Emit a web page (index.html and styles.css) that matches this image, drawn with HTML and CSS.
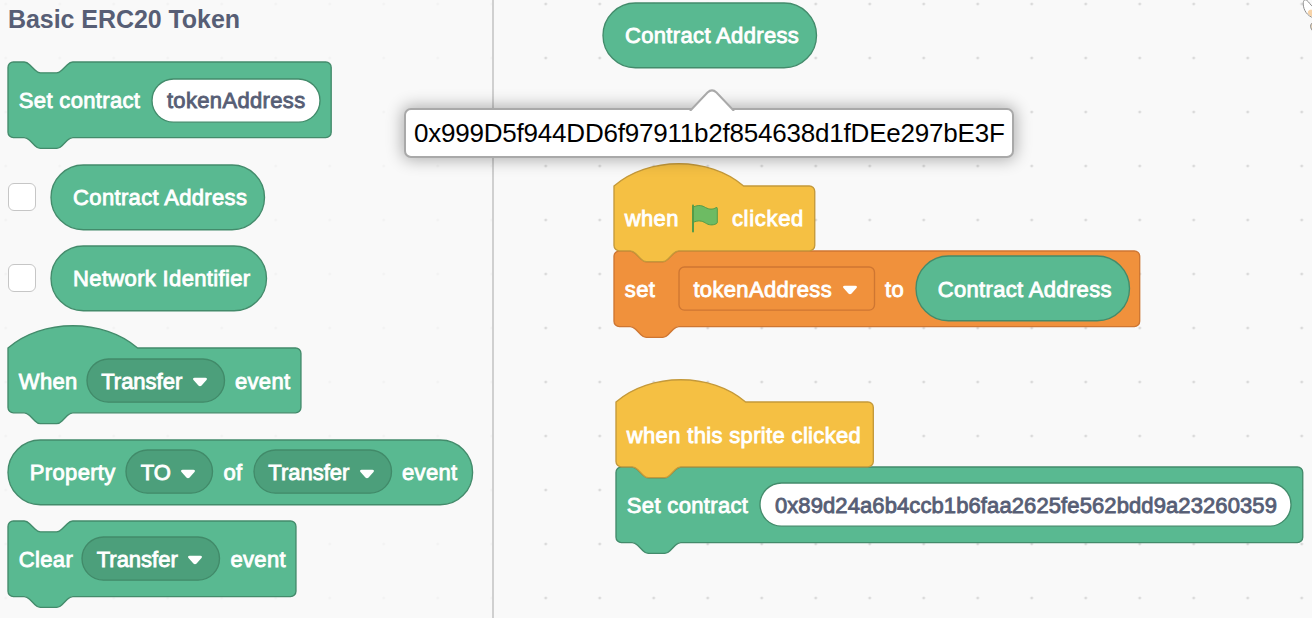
FILE: index.html
```html
<!DOCTYPE html>
<html lang="en">
<head>
<meta charset="utf-8">
<title>Basic ERC20 Token</title>
<link rel="stylesheet" href="styles.css">
</head>
<body>
<main class="editor">
  <aside class="palette">
    <h1 class="title">Basic ERC20 Token</h1>

    <div class="block stack green set-contract">
      <svg class="shape"><path transform="scale(1.35)" d="M0,4A4,4 0 0,1 4,0H12c2,0 3,1 4,2l4,4c1,1 2,2 4,2h12c2,0 3,-1 4,-2l4,-4c1,-1 2,-2 4,-2H235.4a4,4 0 0,1 4,4V52a4,4 0 0,1 -4,4H48c-2,0 -3,1 -4,2l-4,4c-1,1 -2,2 -4,2h-12c-2,0 -3,-1 -4,-2l-4,-4c-1,-1 -2,-2 -4,-2H4a4,4 0 0,1 -4,-4z"/></svg>
      <span class="label w-set-contract">Set contract</span>
      <span class="field input in-token"><svg class="shape"><rect width="100%" height="100%" rx="21.6"/></svg><span class="label">tokenAddress</span></span>
    </div>

    <div class="row row-a">
      <span class="check"></span>
      <div class="block reporter green address"><svg class="shape"><rect width="100%" height="100%" rx="32.4"/></svg><span class="label">Contract Address</span></div>
    </div>
    <div class="row row-b">
      <span class="check"></span>
      <div class="block reporter green network"><svg class="shape"><rect width="100%" height="100%" rx="32.4"/></svg><span class="label">Network Identifier</span></div>
    </div>

    <div class="block hat green when-event">
      <svg class="shape"><path transform="scale(1.35)" d="M0,0c25,-22 71,-22 96,0H213a4,4 0 0,1 4,4V44a4,4 0 0,1 -4,4H48c-2,0 -3,1 -4,2l-4,4c-1,1 -2,2 -4,2h-12c-2,0 -3,-1 -4,-2l-4,-4c-1,-1 -2,-2 -4,-2H4a4,4 0 0,1 -4,-4z"/></svg>
      <span class="label w-when">When</span>
      <span class="field menu transfer"><svg class="shape"><rect width="100%" height="100%" rx="21.6"/></svg><span class="label tight">Transfer</span><svg class="arrow" viewBox="0 0 16 10"><path d="M2.600 .7H13.400C15 .7 15.400 2 14.500 3L9.600 8.500C8.600 9.600 7.400 9.600 6.400 8.500L1.500 3C.6 2 1 .7 2.600 .7z"/></svg></span>
      <span class="label">event</span>
    </div>

    <div class="block reporter green property">
      <svg class="shape"><rect width="100%" height="100%" rx="32.4"/></svg>
      <span class="label w-property">Property</span>
      <span class="field menu to-menu"><svg class="shape"><rect width="100%" height="100%" rx="21.6"/></svg><span class="label tight">TO</span><svg class="arrow" viewBox="0 0 16 10"><path d="M2.600 .7H13.400C15 .7 15.400 2 14.500 3L9.600 8.500C8.600 9.600 7.400 9.600 6.400 8.500L1.500 3C.6 2 1 .7 2.600 .7z"/></svg></span>
      <span class="label w-of">of</span>
      <span class="field menu transfer"><svg class="shape"><rect width="100%" height="100%" rx="21.6"/></svg><span class="label tight">Transfer</span><svg class="arrow" viewBox="0 0 16 10"><path d="M2.600 .7H13.400C15 .7 15.400 2 14.500 3L9.600 8.500C8.600 9.600 7.400 9.600 6.400 8.500L1.500 3C.6 2 1 .7 2.600 .7z"/></svg></span>
      <span class="label">event</span>
    </div>

    <div class="block stack green clear-event">
      <svg class="shape"><path transform="scale(1.35)" d="M0,4A4,4 0 0,1 4,0H12c2,0 3,1 4,2l4,4c1,1 2,2 4,2h12c2,0 3,-1 4,-2l4,-4c1,-1 2,-2 4,-2H209.3a4,4 0 0,1 4,4V52a4,4 0 0,1 -4,4H48c-2,0 -3,1 -4,2l-4,4c-1,1 -2,2 -4,2h-12c-2,0 -3,-1 -4,-2l-4,-4c-1,-1 -2,-2 -4,-2H4a4,4 0 0,1 -4,-4z"/></svg>
      <span class="label w-clear">Clear</span>
      <span class="field menu transfer"><svg class="shape"><rect width="100%" height="100%" rx="21.6"/></svg><span class="label tight">Transfer</span><svg class="arrow" viewBox="0 0 16 10"><path d="M2.600 .7H13.400C15 .7 15.400 2 14.500 3L9.600 8.500C8.600 9.600 7.400 9.600 6.400 8.500L1.500 3C.6 2 1 .7 2.600 .7z"/></svg></span>
      <span class="label">event</span>
    </div>
  </aside>

  <section class="canvas">
    <div class="script script-address">
      <div class="block reporter green address"><svg class="shape"><rect width="100%" height="100%" rx="32.4"/></svg><span class="label">Contract Address</span></div>
    </div>

    <div class="script script-flag">
      <div class="block hat yellow flag-hat">
        <svg class="shape"><path transform="scale(1.35)" d="M0,0c25,-22 71,-22 96,0H144.7a4,4 0 0,1 4,4V44a4,4 0 0,1 -4,4H48c-2,0 -3,1 -4,2l-4,4c-1,1 -2,2 -4,2h-12c-2,0 -3,-1 -4,-2l-4,-4c-1,-1 -2,-2 -4,-2H4a4,4 0 0,1 -4,-4z"/></svg>
        <span class="label w-when-low">when</span>
        <svg class="flag" viewBox="0 0 28 30"><path class="cloth" d="M2 3.2C8 .2 11.500 1.800 14.500 3.500C18.500 5.700 22 5.500 25 3.700Q26.300 3 26.300 4.500V18.200Q26.300 19.300 25.300 19.700C21.500 21.700 17.500 21 14.500 19C11 16.700 7 16 2 18.500z"/><path class="pole" d="M2 1.600V27.600"/></svg>
        <span class="label clicked">clicked</span>
      </div>
      <div class="block stack orange set-var">
        <svg class="shape"><path transform="scale(1.35)" d="M0,4A4,4 0 0,1 4,0H12c2,0 3,1 4,2l4,4c1,1 2,2 4,2h12c2,0 3,-1 4,-2l4,-4c1,-1 2,-2 4,-2H385.4a4,4 0 0,1 4,4V52a4,4 0 0,1 -4,4H48c-2,0 -3,1 -4,2l-4,4c-1,1 -2,2 -4,2h-12c-2,0 -3,-1 -4,-2l-4,-4c-1,-1 -2,-2 -4,-2H4a4,4 0 0,1 -4,-4z"/></svg>
        <span class="label w-set">set</span>
        <span class="field menu var-menu"><svg class="shape"><rect width="100%" height="100%" rx="5.4"/></svg><span class="label">tokenAddress</span><svg class="arrow" viewBox="0 0 16 10"><path d="M2.600 .7H13.400C15 .7 15.400 2 14.500 3L9.600 8.500C8.600 9.600 7.400 9.600 6.400 8.500L1.500 3C.6 2 1 .7 2.600 .7z"/></svg></span>
        <span class="label w-to">to</span>
        <div class="block reporter green address"><svg class="shape"><rect width="100%" height="100%" rx="32.4"/></svg><span class="label">Contract Address</span></div>
      </div>
    </div>

    <div class="script script-sprite">
      <div class="block hat yellow sprite-hat">
        <svg class="shape"><path transform="scale(1.35)" d="M0,0c25,-22 71,-22 96,0H186.600a4,4 0 0,1 4,4V44a4,4 0 0,1 -4,4H48c-2,0 -3,1 -4,2l-4,4c-1,1 -2,2 -4,2h-12c-2,0 -3,-1 -4,-2l-4,-4c-1,-1 -2,-2 -4,-2H4a4,4 0 0,1 -4,-4z"/></svg>
        <span class="label">when this sprite clicked</span>
      </div>
      <div class="block stack green set-long">
        <svg class="shape"><path transform="scale(1.35)" d="M0,4A4,4 0 0,1 4,0H12c2,0 3,1 4,2l4,4c1,1 2,2 4,2h12c2,0 3,-1 4,-2l4,-4c1,-1 2,-2 4,-2H504.700a4,4 0 0,1 4,4V52a4,4 0 0,1 -4,4H48c-2,0 -3,1 -4,2l-4,4c-1,1 -2,2 -4,2h-12c-2,0 -3,-1 -4,-2l-4,-4c-1,-1 -2,-2 -4,-2H4a4,4 0 0,1 -4,-4z"/></svg>
        <span class="label w-set-contract">Set contract</span>
        <span class="field input in-long"><svg class="shape"><rect width="100%" height="100%" rx="21.6"/></svg><span class="label hex">0x89d24a6b4ccb1b6faa2625fe562bdd9a23260359</span></span>
      </div>
    </div>

    <svg class="sprite" viewBox="0 0 10 34"><path class="ear" d="M12 18C5 16 1.500 10 1.200 4C1.200 0 3-1 5 .5C7 2 8 4.500 11 7z"/><path class="tan" d="M12 17.300C8 16.500 5.500 14 5.800 12C6.500 9.500 9 9.500 12 10z"/><path class="ear tanfill" d="M12 22C7.500 23 7.500 29 12 32z"/></svg>
  </section>

  <div class="bubble">
    <svg class="tip" viewBox="0 0 48 22"><path d="M2 22L19.500 3.500Q24 -.8 28.500 3.500L46 22"/></svg>
    <span class="value">0x999D5f944DD6f97911b2f854638d1fDEe297bE3F</span>
  </div>
</main>
</body>
</html>
```
FILE: styles.css
```css
body {
  margin: 0;
  font-family: "Liberation Sans", Arial, sans-serif;
}

.editor {
  position: relative;
  display: grid;
  grid-template-columns: 494px 1fr;
  width: 1312px;
  height: 618px;
  overflow: hidden;
  background: #f9f9f9 radial-gradient(circle at 27px 27px, #dadada 1px, transparent 1.8px) -21.3px -23px / 54px 54px;
}

.palette {
  display: flex;
  flex-direction: column;
  box-sizing: border-box;
  padding-left: 8px;
  border-right: 2px solid #d0d0d0;
  background: rgba(249, 249, 249, 0.8);
}

.title {
  margin: 0 0 22.3px;
  height: 40px;
  line-height: 39px;
  font-size: 25px;
  letter-spacing: -0.06px;
  white-space: nowrap;
  color: #575e75;
}

/* Blocks: an SVG outline behind a row of labels and fields */
.block,
.field {
  position: relative;
  display: flex;
  flex: none;
  align-items: center;
  box-sizing: border-box;
}

.block {
  gap: 10.8px;
  padding: 0 10.8px;
  --text: #fff;
}

.stack { height: 75.6px; }
.hat,
.reporter { height: 64.8px; }
.reporter { padding: 0 21.8px; }

.shape {
  position: absolute;
  left: 0;
  top: 0;
  width: 100%;
  height: 100%;
  overflow: visible;
  fill: var(--fill);
  stroke: var(--line);
  stroke-width: 1.35px;
}

.shape path { stroke-width: 1px; }

.green { --fill: #59b991; --line: #438b6b; }
.yellow { --fill: #f5c043; --line: #c4993a; }
.orange { --fill: #f0913c; --line: #ce7632; }

.label {
  position: relative;
  flex: none;
  padding-top: 2.4px;
  font-size: 22px;
  line-height: 26px;
  letter-spacing: 0.34px;
  white-space: nowrap;
  color: var(--text);
  -webkit-text-stroke: 0.85px var(--text);
}

.tight { letter-spacing: 0; }
.hex { letter-spacing: 0.1px; }
.clicked { letter-spacing: 0.7px; }

.field {
  height: 43.2px;
  padding: 0 14.6px;
  justify-content: space-between;
}

.menu { padding-right: 16.2px; }
.input { --fill: #fff; --text: #575e75; }
.green > .menu { --fill: #4c9f7b; --line: #418a69; }

.arrow {
  position: relative;
  flex: none;
  width: 16px;
  height: 10px;
  margin-top: 3px;
  fill: #fff;
}

.w-set-contract { width: 122.7px; }
.w-when { width: 57px; }
.w-property { width: 85.5px; }
.w-of { width: 19.5px; }
.w-clear { width: 52.5px; }
.w-when-low { width: 54px; }
.w-set { width: 43.2px; }
.w-to { width: 20px; }
.in-token { width: 168px; }
.in-long { width: 531px; }
.transfer { width: 137.5px; }
.to-menu { width: 86.5px; }
.var-menu { width: 195.5px; }

.set-contract { width: 323.2px; margin-bottom: 26.7px; }
.address { width: 213.5px; }
.network { width: 215.5px; }
.when-event { width: 293px; margin-bottom: 26.9px; }
.property { width: 464.6px; margin-bottom: 16.2px; }
.clear-event { width: 288px; }

.row { display: flex; align-items: center; gap: 15.3px; }
.row-a { margin-bottom: 16.2px; }
.row-b { margin-bottom: 37.6px; }

.check {
  width: 28px;
  height: 28px;
  box-sizing: border-box;
  border: 1px solid #c6c6c6;
  border-radius: 6px;
  background: #fff;
}

/* Scripts sit freely on the canvas */
.canvas { position: relative; }
.script { position: absolute; }
.script-address { left: 109.2px; top: 2.7px; }
.script-flag { left: 120px; top: 185.9px; }
.script-sprite { left: 122px; top: 402.4px; }

.script .hat { z-index: 1; }
.flag-hat { width: 200.7px; }
.sprite-hat { width: 257.3px; }
.set-var { width: 525.7px; }
.set-long { width: 686.8px; }

.flag {
  position: relative;
  flex: none;
  width: 28px;
  height: 30px;
  margin: 1px 2px 0 1.5px;
}

.cloth { fill: #6dbb63; stroke: #549b48; stroke-width: 1px; }
.pole { fill: none; stroke: #549b48; stroke-width: 2px; stroke-linecap: round; }

.sprite {
  position: absolute;
  right: 0;
  top: 0;
  width: 10px;
  height: 34px;
}

.ear { fill: #fff; stroke: #8c8c8c; stroke-width: 1px; }
.tan { fill: #f7d3a8; }
.tanfill { fill: #f0dcc0; }

.bubble {
  position: absolute;
  z-index: 2;
  left: 404px;
  top: 108px;
  width: 610px;
  height: 50px;
  display: flex;
  align-items: center;
  box-sizing: border-box;
  padding-left: 8px;
  border: 2px solid #a9a9a9;
  border-radius: 7px;
  background: #fff;
  box-shadow: 0 0 16px 2px rgba(0, 0, 0, 0.3);
}

.value {
  font-size: 26px;
  line-height: 30px;
  letter-spacing: -0.21px;
  white-space: nowrap;
  color: #000;
}

.tip {
  position: absolute;
  left: 282px;
  top: -21.500px;
  width: 48px;
  height: 22px;
  fill: #fff;
  stroke: #a9a9a9;
  stroke-width: 2px;
}
```
